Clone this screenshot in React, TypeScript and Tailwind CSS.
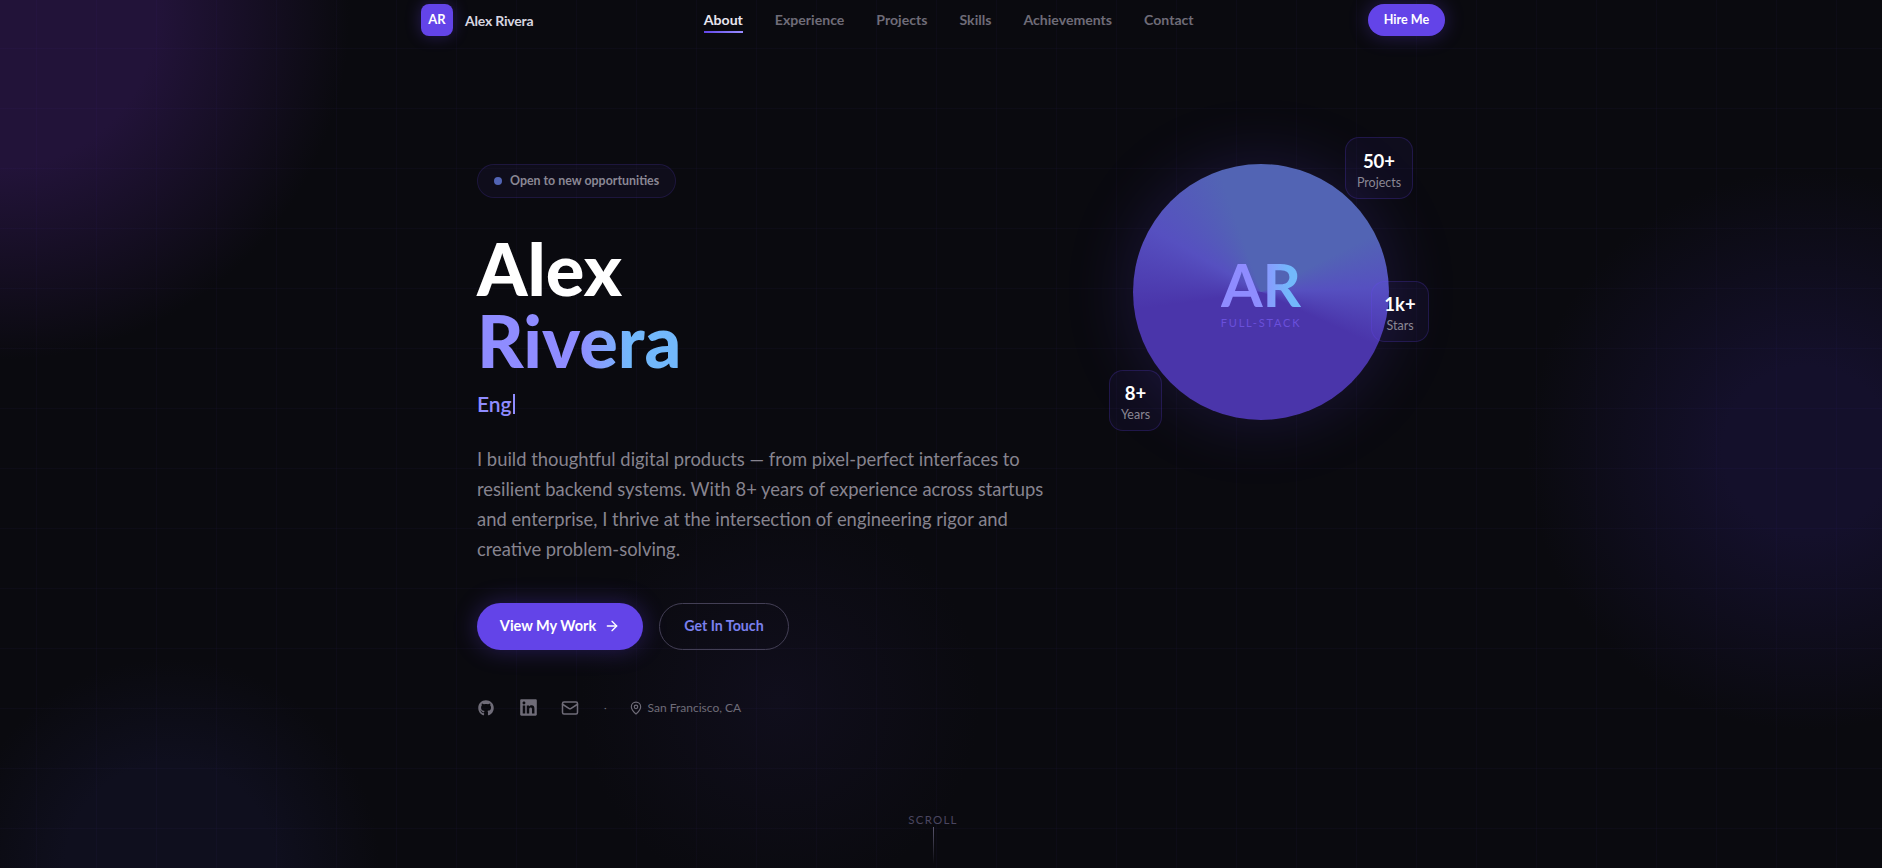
import { ArrowRight, Mail, MapPin } from "lucide-react";
import { FaGithub, FaLinkedin } from "react-icons/fa";

const links = ["About", "Experience", "Projects", "Skills", "Achievements", "Contact"];

const Stat = ({ value, label, className }: { value: string; label: string; className: string }) => (
  <div className={`absolute flex flex-col items-center justify-center rounded-[14px] border border-[#6c47ff]/20 bg-[#6c47ff]/[0.06] pt-[4px] ${className}`}>
    <span className="text-[18.5px] leading-[25px] font-bold text-white">{value}</span>
    <span className="text-[12.5px] leading-[18px] text-[#8a8794]">{label}</span>
  </div>
);

export default function App() {
  return (
    <div className="relative h-[868px] w-full overflow-hidden bg-[#0a0a0f] font-['Lato',sans-serif]">
      {/* background glows */}
      <div className="absolute -left-[350px] -top-[340px] h-[700px] w-[700px] bg-[radial-gradient(circle_closest-side,#221339_0%,#221339_45%,transparent_100%)]" />
      <div className="absolute left-[1527px] top-[170px] h-[560px] w-[560px] bg-[radial-gradient(circle_closest-side,#14102b_0%,#14102b_30%,transparent_100%)]" />
      <div className="absolute left-[-40px] top-[658px] h-[420px] w-[420px] bg-[radial-gradient(circle_closest-side,#0f0f1e_0%,#0f0f1e_50%,transparent_100%)]" />
      <div className="absolute left-[580px] top-[500px] h-[400px] w-[400px] bg-[radial-gradient(circle_closest-side,#100e1c_0%,transparent_100%)]" />
      <div className="absolute inset-0 bg-[linear-gradient(rgba(108,71,255,0.03)_1px,transparent_1px),linear-gradient(90deg,rgba(108,71,255,0.03)_1px,transparent_1px)] bg-[size:60px_60px] bg-[position:36px_48px]" />

      <div className="relative flex h-full w-[1866px] flex-col">
        {/* nav */}
        <nav className="mx-auto flex h-[40px] w-[1024px] items-center justify-between">
          <div className="flex items-center gap-3">
            <div className="flex h-8 w-8 items-center justify-center rounded-lg bg-[#6344e8] text-[13px] font-bold text-white shadow-[0_0_16px_rgba(108,71,255,0.3)]">AR</div>
            <span className="text-[14px] font-bold tracking-[-0.2px] text-[#d8d6e0]">Alex Rivera</span>
          </div>
          <div className="mr-[4px] flex items-center gap-8">
            {links.map((l, i) => (
              <a key={l} className={`relative text-[14.1px] font-bold ${i === 0 ? "text-[#e8e6f0]" : "text-[#6f6c78]"}`}>
                {l}
                {i === 0 && <span className="absolute bottom-[-2px] left-0 h-[2px] w-full bg-gradient-to-r from-[#6344e8] to-[#9a8cff]" />}
              </a>
            ))}
          </div>
          <button className="h-8 w-[77px] rounded-full bg-[#6344e8] text-[12.6px] font-bold text-white shadow-[0_0_20px_rgba(108,71,255,0.3)]">Hire Me</button>
        </nav>

        {/* hero */}
        <main className="mx-auto flex w-[912px] flex-1 items-start justify-between pt-[124px]">
          <div className="flex w-[600px] flex-col items-start">
            <div className="flex h-[34px] w-[199px] items-center gap-2 rounded-full border border-[#6c47ff]/15 bg-[#6c47ff]/[0.05] pl-4">
              <span className="h-2 w-2 rounded-full bg-[#5264b4]" />
              <span className="mt-px whitespace-nowrap text-[12.4px] font-bold text-[#8a8794]">Open to new opportunities</span>
            </div>
            <h1 className="mt-[34px] text-[72px] leading-[72px] font-black text-white">
              Alex
              <br />
              <span className="bg-gradient-to-r from-[#8f8cff] from-50% to-[#72b8fb] to-75% bg-clip-text text-transparent">Rivera</span>
            </h1>
            <div className="mt-[13px] flex h-[30px] items-center text-[21px] font-semibold text-[#8f8cff]">
              Eng<span className="ml-[1px] h-[20px] w-[2px] bg-[#8f8cff]" />
            </div>
            <p className="mt-[26px] w-[570px] text-[18.4px] leading-[29.9px] text-[#87848f]">
              I build thoughtful digital products — from pixel-perfect interfaces to resilient backend systems. With 8+ years of experience across startups and enterprise, I thrive at the intersection of engineering rigor and creative problem-solving.
            </p>
            <div className="mt-[38px] flex gap-4">
              <button className="flex h-[47px] w-[166px] items-center justify-center gap-[8px] rounded-full bg-[#6344e8] text-[14.5px] font-bold text-white shadow-[0_0_24px_rgba(108,71,255,0.3)]">
                View My Work <ArrowRight size={16} />
              </button>
              <button className="h-[47px] w-[130px] rounded-full border border-[#433f55] text-[14.2px] font-bold text-[#7b80ee]">Get In Touch</button>
            </div>
            <div className="mt-[49px] flex h-[18px] items-center text-[#6f6c78]">
              <FaGithub size={16} className="ml-[1px]" />
              <FaLinkedin size={19} className="ml-[25px]" />
              <Mail size={18} className="ml-[23px]" />
              <span className="ml-[25px] text-[10px]">·</span>
              <MapPin size={14} className="ml-[22px]" />
              <span className="ml-[5px] text-[12px]">San Francisco, CA</span>
            </div>
          </div>

          <div className="relative h-[256px] w-[256px] shrink-0">
            <div className="flex h-full w-full flex-col items-center justify-center rounded-full bg-[conic-gradient(from_0deg,#5264b4_0deg,#5264b4_63deg,#5650c0_88deg,#4a35aa_115deg,#4a35aa_262deg,#5650c0_300deg,#5264b4_341deg,#5264b4_360deg)] shadow-[0_0_70px_rgba(108,71,255,0.18)]">
              <span className="mt-[-1px] bg-gradient-to-r from-[#8f8cff] from-45% to-[#72b8fb] to-85% bg-clip-text text-[60px] leading-[62px] font-bold text-transparent">AR</span>
              <span className="mt-[1px] text-[11px] leading-[14px] tracking-[1.8px] text-[#6a50dc]">FULL-STACK</span>
            </div>
            <Stat value="50+" label="Projects" className="left-[212px] -top-[27px] h-[62px] w-[68px]" />
            <Stat value="1k+" label="Stars" className="left-[238px] top-[117px] h-[61px] w-[58px]" />
            <Stat value="8+" label="Years" className="-left-[24px] top-[206px] h-[61px] w-[53px]" />
          </div>
        </main>

        {/* scroll hint */}
        <div className="absolute bottom-[4px] left-0 flex w-full flex-col items-center">
          <span className="text-[11.5px] leading-[14px] tracking-[1.2px] text-[#4a4660]">SCROLL</span>
          <span className="h-[37px] w-px bg-gradient-to-b from-[#5a566e] to-transparent" />
        </div>
      </div>
    </div>
  );
}
